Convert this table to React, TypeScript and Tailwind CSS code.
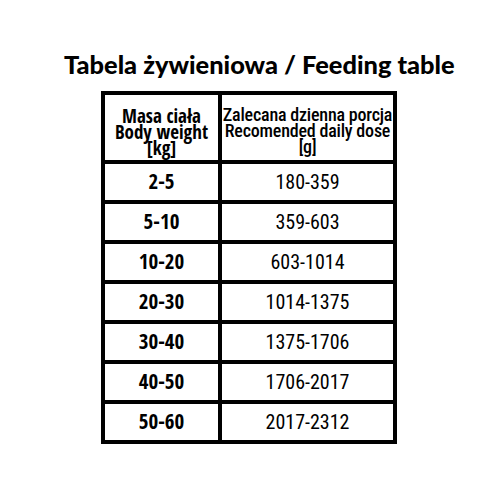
const rows: [string, string][] = [
  ['2-5', '180-359'],
  ['5-10', '359-603'],
  ['10-20', '603-1014'],
  ['20-30', '1014-1375'],
  ['30-40', '1375-1706'],
  ['40-50', '1706-2017'],
  ['50-60', '2017-2312'],
];

export default function App() {
  return (
    <div className="w-[500px] h-[500px] bg-white text-black flex flex-col">
      <h1 className="mt-[49px] pl-[64px] text-[25.4px] leading-[30px] font-black font-['Lato',sans-serif] whitespace-nowrap">
        Tabela żywieniowa / Feeding table
      </h1>

      <div className="ml-[101px] mt-[12px] w-[296px] bg-black p-[4px] grid grid-cols-[113px_171px] gap-[4px]">
        <div className="bg-white h-[65px] flex flex-col items-center justify-start font-['Open_Sans_Condensed',sans-serif] font-bold text-[19px] leading-[16px] pt-[13px]">
          <span>Masa ciała</span>
          <span>Body weight</span>
          <span>[kg]</span>
        </div>
        <div className="bg-white h-[65px] flex flex-col items-center justify-start font-['Roboto_Condensed',sans-serif] font-medium text-[18px] leading-[16px] tracking-[-0.2px] pt-[12px] whitespace-nowrap">
          <span>Zalecana dzienna porcja</span>
          <span>Recomended daily dose</span>
          <span>[g]</span>
        </div>
        {rows.map(([kg, g]) => (
          <div key={kg} className="contents">
            <div className="bg-white h-[36px] flex items-center justify-center font-['Open_Sans_Condensed',sans-serif] font-bold text-[21px]">
              {kg}
            </div>
            <div className="bg-white h-[36px] flex items-center justify-center font-['Roboto_Condensed',sans-serif] text-[20px]">
              {g}
            </div>
          </div>
        ))}
      </div>
    </div>
  );
}
